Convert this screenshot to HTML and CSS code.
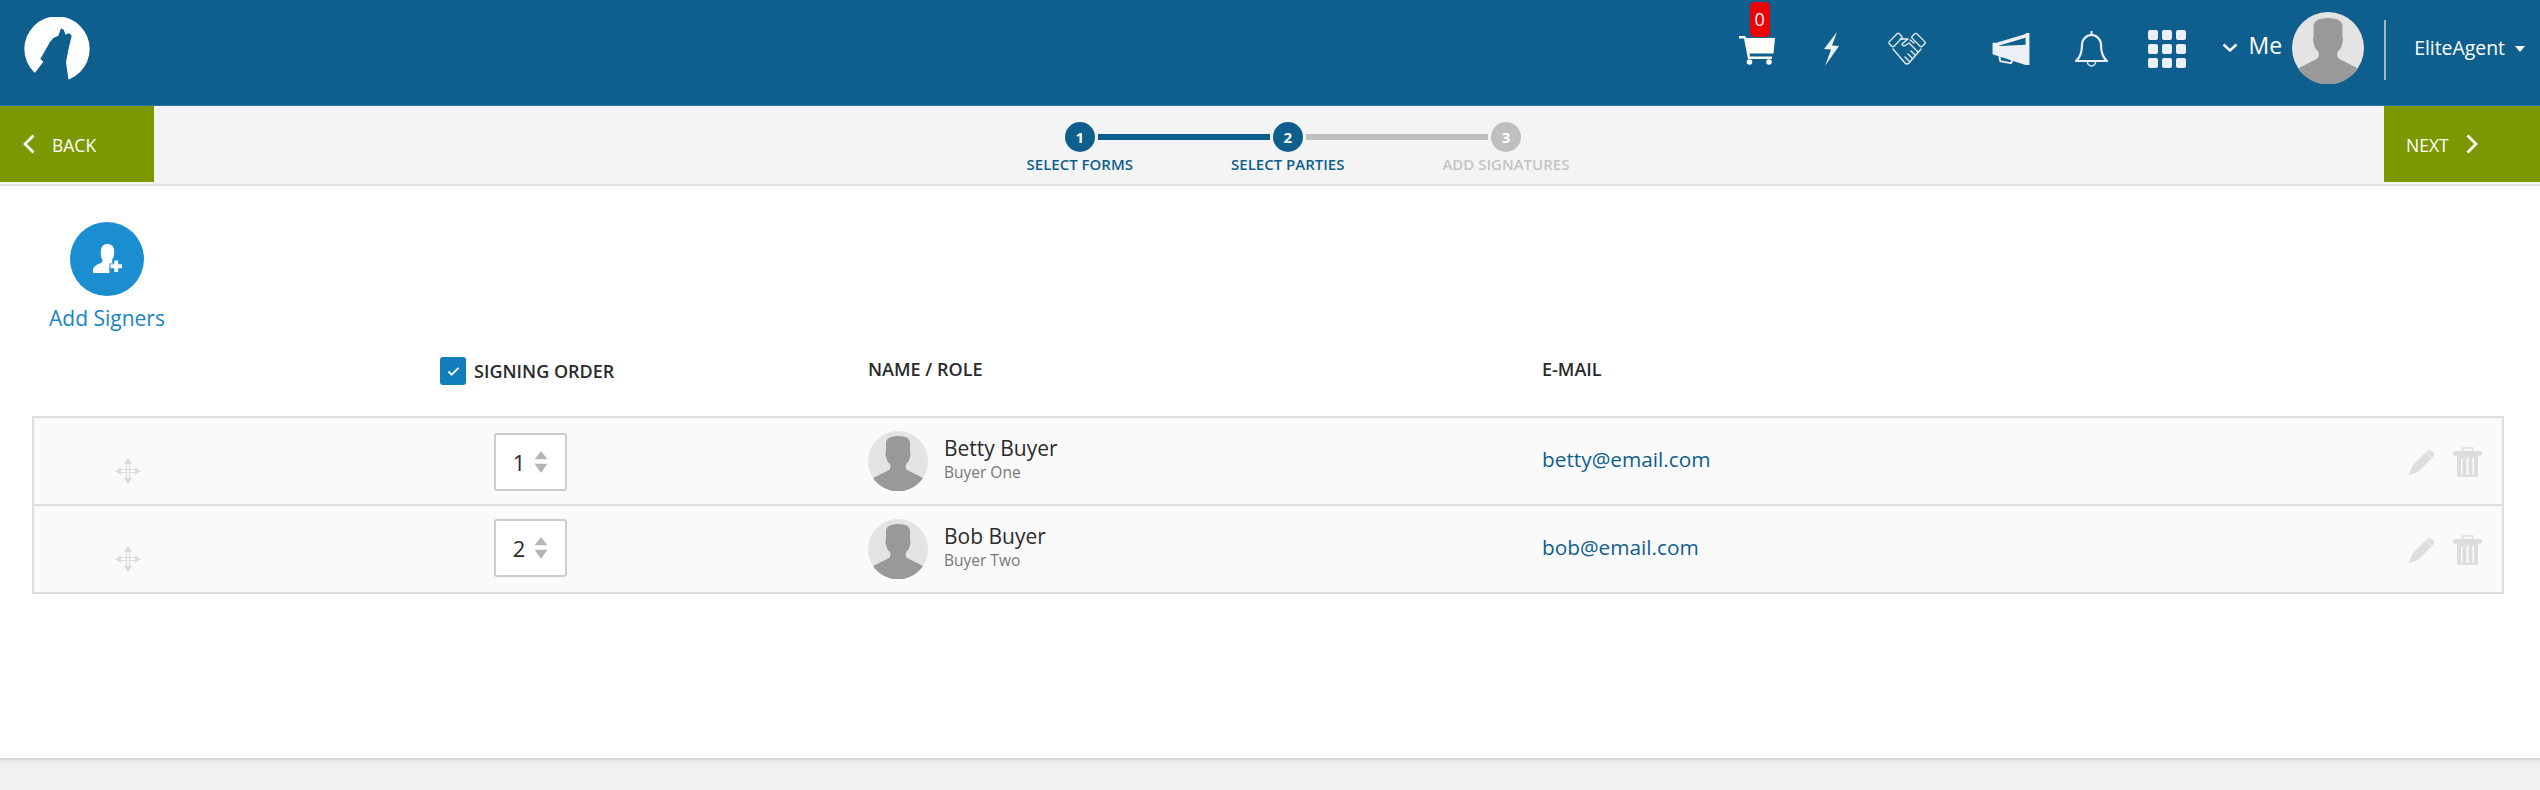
FILE: index.html
```html
<!DOCTYPE html>
<html lang="en">
<head>
    <meta charset="UTF-8" />
    <title>Add Signers</title>
    <link rel="stylesheet" href="styles.css">
</head>
<body>
    <svg class="defs" width="0" height="0">
        <symbol id="person" viewBox="0 0 60 60">
            <circle cx="30" cy="30" r="30" fill="#e4e4e4"/>
            <path d="M5 47 L21 39 Q23 37 22 33 Q19 31 18 26 Q17 23 18 20 L18 11 Q19 5 30 5 Q41 5 42 11 L42 20 Q43 23 42 26 Q41 31 38 33 Q37 37 39 39 L55 47 A30 30 0 0 1 5 47 Z" fill="#999"/>
        </symbol>
        <symbol id="move" viewBox="0 0 26 26">
            <path d="M13 0 L17 6 L9 6 Z M13 26 L17 20 L9 20 Z M0 13 L6 9 L6 17 Z M26 13 L20 9 L20 17 Z" fill="#ddd"/>
            <path d="M11.500 6 V20 M14.500 6 V20 M6 11.500 H20 M6 14.500 H20" stroke="#ddd" stroke-width="1.200"/>
        </symbol>
        <symbol id="pencil" viewBox="0 0 26 26">
            <path d="M0 26 L3 17 L18 2 Q20 0 23 2 L25 4 Q26 6 24 8 L9 23 Z" fill="#ddd"/>
            <path d="M17 3.500 L22.500 9" stroke="#fafafa" stroke-width="1"/>
        </symbol>
        <symbol id="trash" viewBox="0 0 29 30">
            <path d="M9.500 5 V1 H19.500 V5" fill="none" stroke="#ddd" stroke-width="1.500"/>
            <rect x="0" y="4" width="29" height="5" rx="2.500" fill="#ddd"/>
            <path d="M4 9 H25 V30 H4 Z M8 11 V28 H9.500 V11 Z M13.500 11 V28 H15.500 V11 Z M19.500 11 V28 H21 V11 Z" fill="#ddd" fill-rule="evenodd"/>
        </symbol>
        <symbol id="updown" viewBox="0 0 14 24">
            <path d="M7 0 L14 9 H0 Z M7 24 L14 14 H0 Z" fill="#b5b5b5"/>
        </symbol>
    </svg>

    <header class="topbar">
        <svg class="logo" viewBox="72 52 198 195">
            <circle cx="171" cy="148" r="98" fill="#fff"/>
            <path d="M100 226 L130 186 L121 178 L150 127 L160 115 L175 108 L183 86 L191 90 L197 105 L207 100 L215 108 L205 150 L198 188 L206 244 L190 270 L130 270 Z" fill="#0f5f8e"/>
        </svg>
        <nav class="topnav">
            <div class="cart">
                <span class="badge">0</span>
                <svg class="icon-cart" viewBox="0 0 36 30">
                    <path d="M0 1 H6 L7.500 3 H36 L34.500 18.500 H10.500 L11 21.500 H33 V24 H9 L5 3.500 H0 Z" fill="#fff"/>
                    <circle cx="10.500" cy="27" r="2.800" fill="#fff"/>
                    <circle cx="30" cy="27" r="2.800" fill="#fff"/>
                </svg>
            </div>
            <svg class="icon-bolt" viewBox="0 0 16 34">
                <path d="M13 0 L0 17 L7 17.500 L1 34 L15 14 L8 13.500 Z" fill="#eaf0f5"/>
            </svg>
            <svg class="icon-shake" viewBox="0 0 38 34" fill="none" stroke="#eaf0f5" stroke-width="1.300" stroke-linejoin="round" stroke-linecap="round">
                <rect x="0.500" y="4.750" width="14" height="6.500" rx="1.500" transform="rotate(-45 7.500 8)"/>
                <rect x="23.500" y="4.750" width="14" height="6.500" rx="1.500" transform="rotate(45 30.500 8)"/>
                <path d="M5 17 L17 31 Q19 33 21 31 L33 17"/>
                <path d="M12 7 H20 L14 12 Q15 15 18 13 L21 11 L30 20"/>
                <path d="M26 11 L22 8"/>
                <path d="M27 23 L23 19 M24 26 L20 22 M21 29 L17 25"/>
            </svg>
            <svg class="icon-horn" viewBox="0 0 38 34">
                <path d="M0 10 L4 10 L34 1 L34 0 L38 0 V33 L34 33 L0 22 Z M7 13 V13.500 L34 12 V5 Z" fill="#eaf0f5" fill-rule="evenodd"/>
                <path d="M7 24 L8 29 L19 31 L21 27" fill="none" stroke="#eaf0f5" stroke-width="2"/>
            </svg>
            <svg class="icon-bell" viewBox="0 0 35 38" fill="none" stroke="#eaf0f5" stroke-width="2.200" stroke-linejoin="round">
                <path d="M2 31 Q8 26 8 15 A9.500 10 0 0 1 27 15 Q27 26 33 31 Z"/>
                <path d="M17.500 1 V5"/>
                <path d="M13.500 32 A4 4 0 0 0 21.500 32" stroke-width="1.500"/>
            </svg>
            <div class="apps">
                <span></span><span></span><span></span>
                <span></span><span></span><span></span>
                <span></span><span></span><span></span>
            </div>
            <svg class="chevron-down" viewBox="0 0 16 9">
                <path d="M1.500 1.500 L8 7.500 L14.500 1.500" fill="none" stroke="#fff" stroke-width="2.400"/>
            </svg>
            <span class="me">Me</span>
            <svg class="nav-avatar"><use href="#person"/></svg>
            <span class="divider"></span>
            <span class="account">EliteAgent</span>
            <svg class="caret" viewBox="0 0 10 6"><path d="M0 0 H10 L5 6 Z" fill="#fff"/></svg>
        </nav>
    </header>

    <div class="wizard">
        <a class="wizard-btn btn-back">
            <svg class="btn-chevron" viewBox="0 0 12 20"><path d="M10.500 1.500 L2 10 L10.500 18.500" fill="none" stroke="#fff" stroke-width="2.800"/></svg>
            <span>BACK</span>
        </a>
        <div class="steps">
            <div class="step done line-first">
                <span class="step-num">1</span>
                <span class="step-label">SELECT FORMS</span>
            </div>
            <div class="step done line-second">
                <span class="step-num">2</span>
                <span class="step-label">SELECT PARTIES</span>
            </div>
            <div class="step">
                <span class="step-num">3</span>
                <span class="step-label">ADD SIGNATURES</span>
            </div>
        </div>
        <a class="wizard-btn btn-next">
            <span>NEXT</span>
            <svg class="btn-chevron" viewBox="0 0 12 20"><path d="M1.500 1.500 L10 10 L1.500 18.500" fill="none" stroke="#fff" stroke-width="2.800"/></svg>
        </a>
    </div>

    <main class="content">
        <div class="add-signers">
            <span class="add-circle">
                <svg viewBox="0 0 32 32">
                    <path d="M1 30 V26 Q2 22 8 20 Q11 19 11 17 Q9 14 9 8 Q9 0 16 0 Q23 0 23 8 Q23 13 21 16 Q20 19 22 20 L18 24 V30 Z" fill="#fff"/>
                    <path d="M23 17 H27 V21 H31 V25 H27 V29 H23 V25 H19 V21 H23 Z" fill="#fff" stroke="#1a8ed0" stroke-width="2" paint-order="stroke"/>
                </svg>
            </span>
            <span class="add-label">Add Signers</span>
        </div>

        <div class="signer-head">
            <div></div>
            <div class="order-head">
                <span class="checkbox">
                    <svg viewBox="0 0 14 12"><path d="M1.500 6 L5 9.500 L12.500 2" fill="none" stroke="#fff" stroke-width="2"/></svg>
                </span>
                <span>SIGNING ORDER</span>
            </div>
            <div class="head-cell">NAME / ROLE</div>
            <div class="head-cell">E-MAIL</div>
            <div></div>
        </div>

        <div class="signers">
            <div class="signer-row">
                <div class="drag"><svg><use href="#move"/></svg></div>
                <div class="order"><div class="order-select"><span>1</span><svg><use href="#updown"/></svg></div></div>
                <div class="person">
                    <svg class="avatar"><use href="#person"/></svg>
                    <div class="person-text">
                        <div class="person-name">Betty Buyer</div>
                        <div class="person-role">Buyer One</div>
                    </div>
                </div>
                <div class="email">betty@email.com</div>
                <div class="actions">
                    <svg class="edit"><use href="#pencil"/></svg>
                    <svg class="trash"><use href="#trash"/></svg>
                </div>
            </div>
            <div class="signer-row">
                <div class="drag"><svg><use href="#move"/></svg></div>
                <div class="order"><div class="order-select"><span>2</span><svg><use href="#updown"/></svg></div></div>
                <div class="person">
                    <svg class="avatar"><use href="#person"/></svg>
                    <div class="person-text">
                        <div class="person-name">Bob Buyer</div>
                        <div class="person-role">Buyer Two</div>
                    </div>
                </div>
                <div class="email">bob@email.com</div>
                <div class="actions">
                    <svg class="edit"><use href="#pencil"/></svg>
                    <svg class="trash"><use href="#trash"/></svg>
                </div>
            </div>
        </div>
    </main>

    <footer class="page-foot"></footer>
</body>
</html>
```

FILE: styles.css
```css
body {
    font-family: 'Open Sans', 'Liberation Sans', sans-serif;
    margin: 0;
    height: 790px;
    overflow: hidden;
    background-color: #fff;
    color: #2b2b2b;
}

.defs {
    display: block;
    height: 0;
}

svg {
    display: block;
    flex: none;
}

/* top bar */
.topbar {
    display: flex;
    align-items: flex-start;
    height: 105px;
    background-color: #0f5f8e;
    border-bottom: 1px solid #2f76a0;
}

.logo {
    width: 66px;
    height: 65px;
    margin: 17px 0 0 24px;
}

.topnav {
    display: flex;
    align-items: center;
    height: 98px;
    margin-left: auto;
    padding-right: 15px;
    color: #fff;
}

.cart {
    position: relative;
    margin-top: 2px;
}

.badge {
    position: absolute;
    top: -33px;
    left: 11px;
    width: 20px;
    height: 35px;
    border-radius: 5px;
    background-color: #ee0000;
    font-size: 18px;
    line-height: 35px;
    text-align: center;
}

.icon-cart {
    width: 36px;
    height: 30px;
}

.icon-bolt {
    width: 16px;
    height: 34px;
    margin-left: 49px;
}

.icon-shake {
    width: 38px;
    height: 34px;
    margin-left: 48px;
}

.icon-horn {
    width: 38px;
    height: 33px;
    margin-left: 66px;
}

.icon-bell {
    width: 35px;
    height: 38px;
    margin-left: 44px;
}

.apps {
    display: grid;
    grid-template-columns: repeat(3, 10px);
    grid-auto-rows: 10px;
    gap: 4px;
    margin-left: 39px;
}

.apps span {
    background-color: #eaf0f5;
    border-radius: 2px;
}

.chevron-down {
    width: 16px;
    height: 9px;
    margin: -4px 0 0 36px;
}

.me {
    margin: -8px 0 0 11px;
    font-size: 23px;
}

.nav-avatar {
    width: 72px;
    height: 72px;
    margin: -2px 0 0 10px;
}

.divider {
    width: 2px;
    height: 60px;
    margin: 2px 0 0 20px;
    background-color: #a9b4bb;
}

.account {
    margin: -4px 0 0 28px;
    font-size: 19.400px;
}

.caret {
    width: 10px;
    height: 6px;
    margin-left: 10px;
}

/* wizard bar */
.wizard {
    display: flex;
    align-items: flex-start;
    justify-content: space-between;
    height: 78px;
    background-color: #f4f4f4;
    border-bottom: 2px solid #e3e3e3;
}

.wizard-btn {
    display: flex;
    align-items: center;
    height: 76px;
    background-color: #7b9800;
    color: #fff;
    font-size: 17.500px;
    box-sizing: border-box;
}

.wizard-btn span {
    margin-top: 2px;
}

.btn-back {
    width: 154px;
    padding-left: 23px;
    gap: 17px;
}

.btn-next {
    width: 156px;
    padding-left: 22px;
    gap: 17px;
}

.btn-chevron {
    width: 12px;
    height: 20px;
    margin-top: -1px;
}

.steps {
    display: flex;
    gap: 98px;
    margin-left: 58px;
}

.step {
    position: relative;
    display: flex;
    flex-direction: column;
    align-items: center;
    padding-top: 16px;
    color: #c4c4c4;
}

.step-num {
    display: block;
    width: 30px;
    height: 30px;
    border-radius: 50%;
    background-color: #bfbfbf;
    color: #fff;
    font-size: 15px;
    font-weight: 700;
    line-height: 30px;
    text-align: center;
}

.step-label {
    margin-top: 2px;
    font-size: 15px;
    font-weight: 600;
    line-height: 20px;
    white-space: nowrap;
}

.step.done {
    color: #0f5f8e;
}

.step.done .step-num {
    background-color: #0f5f8e;
}

.step.line-first::after,
.step.line-second::after {
    content: "";
    position: absolute;
    top: 28px;
    height: 6px;
}

.step.line-first::after {
    left: 71px;
    width: 172px;
    background-color: #0f5f8e;
}

.step.line-second::after {
    left: 75px;
    width: 182px;
    background-color: #bfbfbf;
}

/* signers */
.content {
    height: 572px;
    padding: 36px 36px 0 32px;
    box-sizing: border-box;
}

.add-signers {
    display: flex;
    flex-direction: column;
    align-items: center;
    width: 150px;
    height: 134px;
}

.add-circle {
    display: flex;
    align-items: center;
    justify-content: center;
    width: 74px;
    height: 74px;
    border-radius: 50%;
    background-color: #1a8ed0;
}

.add-circle svg {
    width: 31px;
    height: 31px;
}

.add-label {
    margin-top: 8px;
    font-size: 21px;
    line-height: 28px;
    color: #1a85c2;
    white-space: nowrap;
}

.signer-head,
.signer-row {
    display: grid;
    grid-template-columns: 406px 428px 674px 1fr auto;
}

.signer-head {
    height: 60px;
    padding: 0 2px;
    font-size: 18px;
    font-weight: 600;
}

.order-head {
    display: flex;
    align-items: center;
    gap: 8px;
    height: 30px;
}

.checkbox {
    display: flex;
    align-items: center;
    justify-content: center;
    width: 26px;
    height: 28px;
    border-radius: 3px;
    background-color: #127dbb;
}

.checkbox svg {
    width: 13px;
    height: 11px;
}

.head-cell {
    line-height: 26px;
}

.signers {
    border: 2px solid #ddd;
}

.signer-row {
    align-items: center;
    height: 86px;
    background-color: #fafafa;
}

.signer-row + .signer-row {
    border-top: 2px solid #ddd;
}

.drag {
    padding: 20px 0 0 81px;
}

.drag svg {
    width: 26px;
    height: 26px;
}

.order-select {
    display: flex;
    align-items: center;
    justify-content: center;
    gap: 9px;
    width: 73px;
    height: 58px;
    margin-left: 54px;
    box-sizing: border-box;
    background-color: #fff;
    border: 2px solid #ccc;
    border-radius: 3px;
    font-size: 22px;
}

.signer-row:first-child .order-select {
    margin-top: 2px;
}

.signer-row:last-child .order-select {
    margin-bottom: 2px;
}

.order-select svg {
    width: 14px;
    height: 22px;
}

.person {
    display: flex;
    align-items: center;
    gap: 16px;
}

.avatar {
    width: 60px;
    height: 60px;
}

.person-text {
    margin-top: -6px;
}

.person-name {
    font-size: 21px;
    line-height: 28px;
}

.person-role {
    font-size: 15.500px;
    line-height: 20px;
    color: #777;
}

.email {
    margin-top: -4px;
    font-size: 20.800px;
    color: #0f5f8e;
}

.actions {
    display: flex;
    align-items: center;
    gap: 18px;
    padding: 2px 20px 0 0;
}

.edit {
    width: 26px;
    height: 26px;
}

.trash {
    width: 29px;
    height: 30px;
}

/* grey strip at the bottom */
.page-foot {
    height: 32px;
    background: linear-gradient(#cfcfcf, #e9e9e9 3px, #f2f2f2 8px);
}
```
